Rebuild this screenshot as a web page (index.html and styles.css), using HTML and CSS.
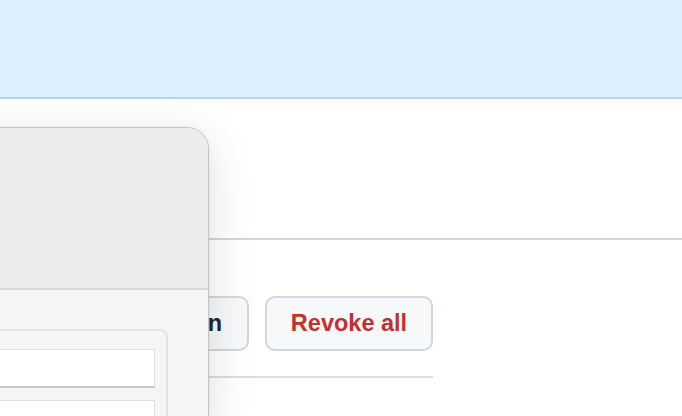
FILE: index.html
```html
<!DOCTYPE html>
<html>
<head>
<meta charset="utf-8">
<link rel="stylesheet" href="styles.css">
</head>
<body>
<div class="banner"></div>
<main class="content">
  <div class="header"></div>
  <div class="actions">
    <button class="btn">Sign in</button>
    <button class="btn btn-danger">Revoke all</button>
  </div>
  <div class="rule"></div>
</main>
<div class="window">
  <div class="titlebar"></div>
  <div class="wbody">
    <div class="group">
      <div class="field"></div>
      <div class="field"></div>
    </div>
  </div>
</div>
</body>
</html>
```
FILE: styles.css
```css
html, body {
  margin: 0;
  padding: 0;
  background: #ffffff;
  font-family: "Liberation Sans", Arial, sans-serif;
  overflow: hidden;
  width: 682px;
  height: 416px;
}
.banner {
  height: 97px;
  background: #ddf0ff;
  border-bottom: 2px solid #b6d6f7;
}
.content {
  display: flex;
  flex-direction: column;
}
.header {
  height: 139px;
  border-bottom: 2px solid #d0d7de;
}
.actions {
  display: flex;
  justify-content: flex-end;
  gap: 16px;
  width: 433px;
  margin-top: 56px;
}
.btn {
  box-sizing: border-box;
  height: 55px;
  padding: 0 25px;
  border: 2px solid #d0d7de;
  border-radius: 10px;
  background: #f6f8fa;
  color: #24292f;
  font-family: "Liberation Sans", Arial, sans-serif;
  font-weight: 700;
  font-size: 23.5px;
  line-height: 1;
}
.btn-danger {
  color: #c4302e;
  width: 168px;
  padding: 0;
}
.rule {
  width: 433px;
  height: 2px;
  margin-top: 25px;
  background: #d8dde2;
}
.window {
  position: absolute;
  left: -300px;
  top: 127px;
  width: 507px;
  height: 300px;
  border: 1px solid #c4c4c4;
  border-radius: 22px 22px 0 0;
  overflow: hidden;
  background: #f5f5f5;
  box-shadow: 0 10px 45px rgba(0,0,0,0.13), 0 0 3px rgba(0,0,0,0.08);
}
.titlebar {
  height: 160px;
  background: #ececec;
  border-bottom: 2px solid #d8d8d8;
}
.wbody {
  padding: 39px 40px 0 0;
  display: flex;
  justify-content: flex-end;
}
.group {
  width: 460px;
  height: 100px;
  box-sizing: border-box;
  border: 2px solid #e2e2e2;
  border-bottom: none;
  border-radius: 8px 8px 0 0;
  padding: 18px 11px 0 0;
  display: flex;
  flex-direction: column;
  align-items: flex-end;
  gap: 12px;
}
.field {
  width: 440px;
  height: 36px;
  flex-shrink: 0;
  background: #ffffff;
  border: 1px solid #e0e0e0;
  border-bottom: 2px solid #c8c8c8;
}
```
